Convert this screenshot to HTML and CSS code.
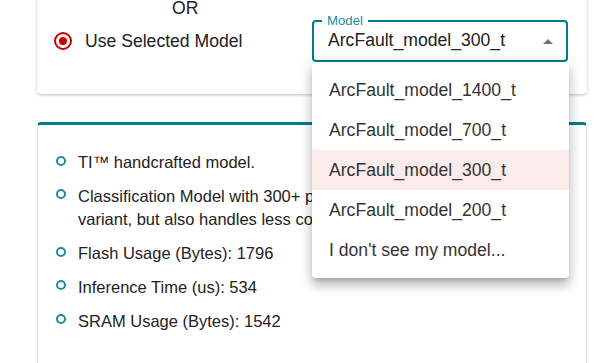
FILE: index.html
```html
<!DOCTYPE html>
<html lang="en">
<head>
<meta charset="UTF-8" />
<meta name="viewport" content="width=device-width, initial-scale=1.0" />
<title>Model Selection</title>
<link rel="stylesheet" href="styles.css">
</head>
<body>
<div class="page">
    <div class="card card-source">
        <div class="or">OR</div>
        <div class="source-row">
            <label class="radio-label">
                <span class="radio checked"></span>
                <span>Use Selected Model</span>
            </label>
            <div class="select">
                <span class="select-label">Model</span>
                <span class="select-value">ArcFault_model_300_t</span>
                <span class="select-arrow"></span>
                <ul class="menu">
                    <li>ArcFault_model_1400_t</li>
                    <li>ArcFault_model_700_t</li>
                    <li class="selected">ArcFault_model_300_t</li>
                    <li>ArcFault_model_200_t</li>
                    <li>I don't see my model...</li>
                </ul>
            </div>
        </div>
    </div>

    <div class="card card-details">
        <ul class="details">
            <li><span class="bullet"></span><span class="text">TI™ handcrafted model.</span></li>
            <li><span class="bullet"></span><span class="text">Classification Model with 300+ parameters. Smaller than 700 variant, but also handles less complex signals.</span></li>
            <li><span class="bullet"></span><span class="text">Flash Usage (Bytes): 1796</span></li>
            <li><span class="bullet"></span><span class="text">Inference Time (us): 534</span></li>
            <li><span class="bullet"></span><span class="text">SRAM Usage (Bytes): 1542</span></li>
        </ul>
    </div>
</div>
</body>
</html>
```

FILE: styles.css
```css
:root {
    --teal: #007c8c;
    --teal-light: #1a8e9b;
    --red: #cc0000;
    --text: #212121;
}
* {
    margin: 0;
    padding: 0;
    box-sizing: border-box;
}
body {
    font-family: "Liberation Sans", Arial, sans-serif;
    background: #fff;
    color: var(--text);
    overflow: hidden;
}
.page {
    width: 550px;
    margin-left: 37px;
}
.card {
    background: #fff;
    border-radius: 4px;
}
.card-source {
    margin-top: -24px;
    padding: 21px 19px 32px 16px;
    box-shadow: 0 1px 3px rgba(0, 0, 0, 0.25);
}
.or {
    font-size: 17.6px;
    line-height: 23px;
    padding-left: 119px;
}
.source-row {
    display: flex;
    align-items: center;
    height: 42px;
}
.radio-label {
    display: flex;
    align-items: center;
    gap: 13px;
    font-size: 17.6px;
    line-height: 24px;
}
.radio {
    width: 18px;
    height: 18px;
    margin-left: 1px;
    border: 2px solid var(--red);
    border-radius: 50%;
    display: flex;
    align-items: center;
    justify-content: center;
}
.radio.checked::after {
    content: "";
    width: 8px;
    height: 8px;
    border-radius: 50%;
    background: var(--red);
}
.select {
    position: relative;
    margin-left: auto;
    width: 256px;
    height: 42px;
    border: 2px solid var(--teal);
    border-radius: 4px;
    padding: 0 13px 3px 14px;
    display: flex;
    align-items: center;
}
.select-label {
    position: absolute;
    top: -8px;
    left: 8px;
    padding: 0 5px;
    background: #fff;
    color: var(--teal-light);
    font-size: 13.2px;
    line-height: 13px;
}
.select-value {
    font-size: 17.6px;
    line-height: 24px;
}
.select-arrow {
    margin-left: auto;
    margin-top: 3px;
    width: 0;
    height: 0;
    border-left: 5px solid transparent;
    border-right: 5px solid transparent;
    border-bottom: 5px solid #757575;
}
.menu {
    position: absolute;
    top: calc(100% + 2px);
    left: -2px;
    width: 257px;
    list-style: none;
    padding: 8px 0;
    background: #fff;
    border-radius: 4px;
    box-shadow: 0 5px 5px -3px rgba(0, 0, 0, 0.2),
        0 8px 10px 1px rgba(0, 0, 0, 0.14),
        0 3px 14px 2px rgba(0, 0, 0, 0.12);
    z-index: 10;
}
.menu li {
    height: 40px;
    line-height: 40px;
    padding: 0 17px;
    font-size: 17.6px;
    color: #333;
    white-space: nowrap;
}
.menu li.selected {
    background: #fbebeb;
}
.card-details {
    margin-top: 28px;
    min-height: 300px;
    border-top: 3px solid var(--teal);
    border-left: 1px solid #e6e6e6;
    border-right: 1px solid #e6e6e6;
    padding: 26px 18px 20px 18px;
    box-shadow: 0 1px 3px rgba(0, 0, 0, 0.08);
}
.details {
    list-style: none;
    display: flex;
    flex-direction: column;
    gap: 10.3px;
}
.details li {
    display: flex;
    gap: 12px;
    font-size: 16.5px;
    line-height: 23.5px;
    color: #222;
}
.bullet {
    flex: none;
    width: 10px;
    height: 10px;
    margin-top: 4.5px;
    border: 2px solid var(--teal-light);
    border-radius: 50%;
}
.details .text {
    max-width: 460px;
}
```
